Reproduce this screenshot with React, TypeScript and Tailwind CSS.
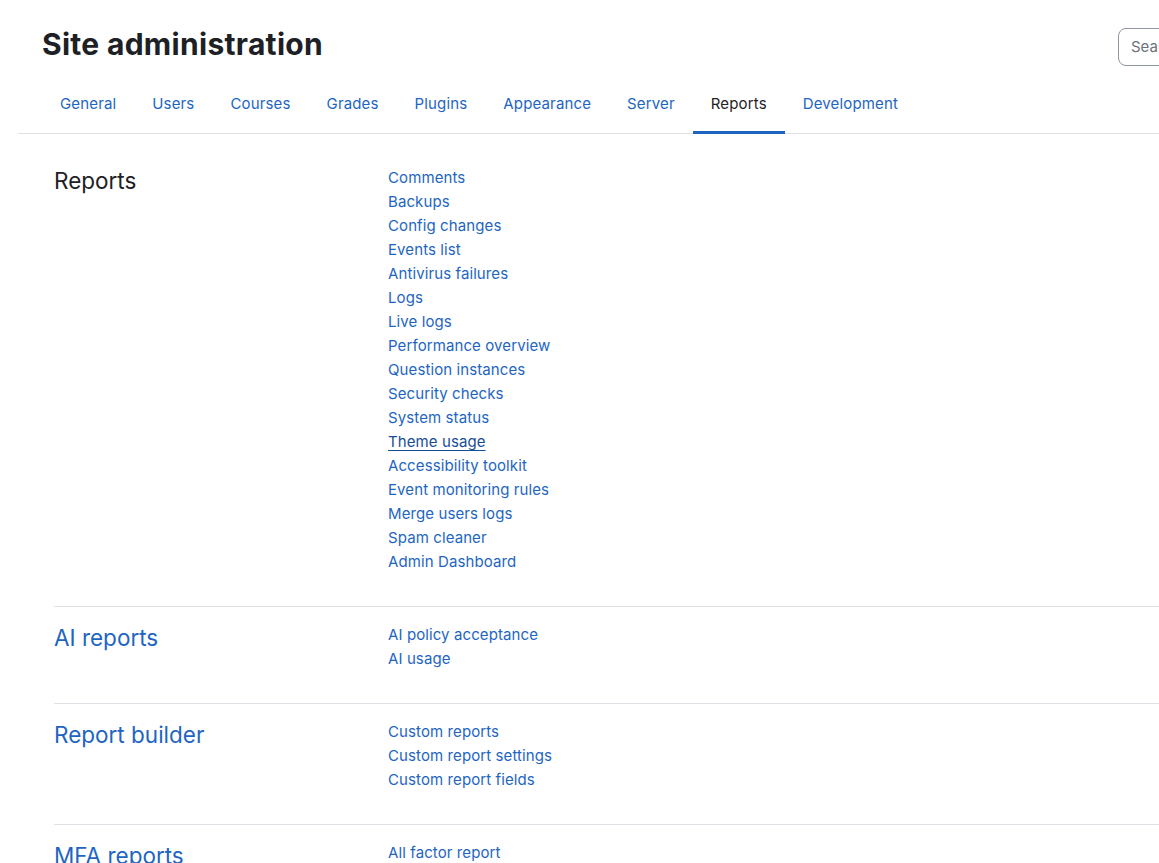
import React from 'react';

// Site administration > Reports tab, Moodle-style

type Section = {
  title: string;
  isLink: boolean;
  links: string[];
};

const tabs = ['General', 'Users', 'Courses', 'Grades', 'Plugins', 'Appearance', 'Server', 'Reports', 'Development'];

const sections: Section[] = [
  {
    title: 'Reports',
    isLink: false,
    links: [
      'Comments',
      'Backups',
      'Config changes',
      'Events list',
      'Antivirus failures',
      'Logs',
      'Live logs',
      'Performance overview',
      'Question instances',
      'Security checks',
      'System status',
      'Theme usage',
      'Accessibility toolkit',
      'Event monitoring rules',
      'Merge users logs',
      'Spam cleaner',
      'Admin Dashboard',
    ],
  },
  {
    title: 'AI reports',
    isLink: true,
    links: ['AI policy acceptance', 'AI usage'],
  },
  {
    title: 'Report builder',
    isLink: true,
    links: ['Custom reports', 'Custom report settings', 'Custom report fields'],
  },
  {
    title: 'MFA reports',
    isLink: true,
    links: ['All factor report'],
  },
];

export default function App() {
  return (
    <div className="w-[1159px] h-[863px] overflow-hidden bg-white font-['Inter','Roboto','Liberation_Sans',sans-serif] text-[#1d2125]">
      <div className="w-[1400px] pl-[18px]">
        {/* Header */}
        <div className="flex items-start pt-[26px] pl-[24px]">
          <h1 className="w-[1076px] text-[30px] leading-[36px] font-bold tracking-[0.3px] text-[#1d2125]">
            Site administration
          </h1>
          <div className="mt-[2px] h-[38px] w-[250px] rounded-lg border border-[#8f959e] px-3 flex items-center text-[15px] text-[#6a737b]">
            Search
          </div>
        </div>

        {/* Secondary nav */}
        <ul className="mt-[12px] flex pl-[24px] border-b border-[#dee2e6]">
          {tabs.map((t) => {
            const active = t === 'Reports';
            return (
              <li
                key={t}
                className={`-mb-px px-[18px] pt-[14px] pb-[15px] text-[15px] leading-6 tracking-[0.15px] border-b-[3px] ${
                  active ? 'border-[#1e64c0] text-[#1d2125]' : 'border-transparent text-[#1e65c2]'
                }`}
              >
                {t}
              </li>
            );
          })}
        </ul>

        {/* Sections */}
        <div className="pl-[36px] pt-[16px]">
          {sections.map((s, i) => (
            <div
              key={s.title}
              className={`flex pt-[16px] pb-[32px] ${i > 0 ? 'border-t border-[#dee2e6]' : ''}`}
            >
              <h3
                className={`w-[334px] shrink-0 mt-[1px] text-[22.5px] leading-[27px] ${
                  s.isLink ? 'text-[#1e65c2]' : 'text-[#1d2125]'
                }`}
              >
                {s.title}
              </h3>
              <ul className="flex flex-col text-[15px] leading-6 tracking-[0.1px]">
                {s.links.map((l) => (
                  <li key={l}>
                    <span
                      className={
                        l === 'Theme usage'
                          ? 'text-[#174e96] underline underline-offset-[3px]'
                          : 'text-[#1e65c2]'
                      }
                    >
                      {l}
                    </span>
                  </li>
                ))}
              </ul>
            </div>
          ))}
        </div>
      </div>
    </div>
  );
}
